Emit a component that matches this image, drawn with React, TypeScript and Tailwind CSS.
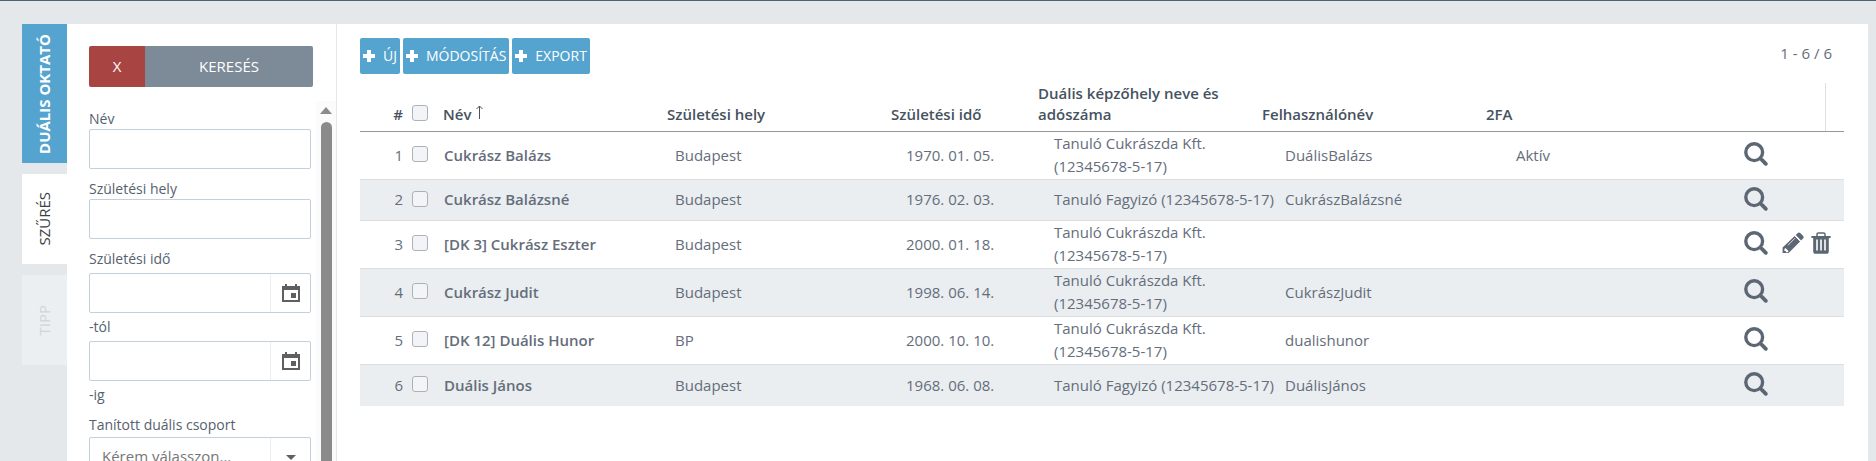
import { useState } from "react";
import type { ReactNode } from "react";

type Teacher = {
  id: number;
  name: string;
  birthPlace: string;
  birthDate: string;
  company: string;
  username: string;
  twoFactor: string;
  editable?: boolean;
};

const teachers: Teacher[] = [
  { id: 1, name: "Cukrász Balázs", birthPlace: "Budapest", birthDate: "1970. 01. 05.", company: "Tanuló Cukrászda Kft. (12345678-5-17)", username: "DuálisBalázs", twoFactor: "Aktív" },
  { id: 2, name: "Cukrász Balázsné", birthPlace: "Budapest", birthDate: "1976. 02. 03.", company: "Tanuló Fagyizó (12345678-5-17)", username: "CukrászBalázsné", twoFactor: "" },
  { id: 3, name: "[DK 3] Cukrász Eszter", birthPlace: "Budapest", birthDate: "2000. 01. 18.", company: "Tanuló Cukrászda Kft. (12345678-5-17)", username: "", twoFactor: "", editable: true },
  { id: 4, name: "Cukrász Judit", birthPlace: "Budapest", birthDate: "1998. 06. 14.", company: "Tanuló Cukrászda Kft. (12345678-5-17)", username: "CukrászJudit", twoFactor: "" },
  { id: 5, name: "[DK 12] Duális Hunor", birthPlace: "BP", birthDate: "2000. 10. 10.", company: "Tanuló Cukrászda Kft. (12345678-5-17)", username: "dualishunor", twoFactor: "" },
  { id: 6, name: "Duális János", birthPlace: "Budapest", birthDate: "1968. 06. 08.", company: "Tanuló Fagyizó (12345678-5-17)", username: "DuálisJános", twoFactor: "" },
];

const SearchIcon = () => (
  <svg className="w-6 h-6" viewBox="0 0 24 24" fill="none" stroke="currentColor">
    <circle cx="10.2" cy="10.2" r="8.4" strokeWidth="3.4" />
    <path d="M16.4 16.4l2 2" strokeWidth="3" />
    <path d="M18.2 18.2l3.6 3.6" strokeWidth="3.8" strokeLinecap="round" />
  </svg>
);

const PencilIcon = () => (
  <svg className="w-[22px] h-[22px]" viewBox="0 0 22 22" fill="currentColor">
    <path d="M15.6 1.2a2 2 0 0 1 2.8 0l2.6 2.6a2 2 0 0 1 0 2.8l-1.9 1.9-5.4-5.4z" />
    <path d="M12.7 4.1l5.4 5.4L6.6 21H.6v-5.6zM2.4 17.1v1.8h1.5v1.4h1.8l1-1.1-3.2-3.2z" fillRule="evenodd" />
    <path d="M12.9 3.900l5.400 5.400" stroke="#fff" strokeWidth="1" fill="none" />
    <path d="M6 13.2l7-7" stroke="#fff" strokeWidth=".8" fill="none" />
  </svg>
);

const TrashIcon = () => (
  <svg className="w-5 h-[22px]" viewBox="0 0 20 22" fill="currentColor">
    <path d="M6 4V2.2C6 1.3 6.5.9 7.3.9h5.4c.8 0 1.3.4 1.3 1.3V4" fill="none" stroke="currentColor" strokeWidth="1.5" />
    <path d="M.4 4h19.2v2H.4z" />
    <path
      fillRule="evenodd"
      d="M2.2 6h15.6v13.4c0 1.5-.9 2.4-2.3 2.4h-11c-1.4 0-2.3-.9-2.3-2.4zM5.2 7.6v10.8h1.6V7.6zM9.2 7.6v10.8h1.6V7.6zM13.2 7.6v10.8h1.6V7.6z"
    />
  </svg>
);

const PlusIcon = () => (
  <svg className="w-3 h-3" viewBox="0 0 12 12" fill="currentColor">
    <path d="M4 0h4v4h4v4H8v4H4V8H0V4h4z" />
  </svg>
);

const CalendarIcon = () => (
  <svg className="w-[18px] h-[18px]" viewBox="0 0 18 18" fill="#5f5f5f">
    <path fillRule="evenodd" d="M0 2h3V0h2v2h8V0h2v2h3v16H0zM2 6v10h14V6z" />
    <path d="M9 9h5v5H9z" />
  </svg>
);

const SideTab = ({ children, className }: { children: ReactNode; className: string }) => (
  <button type="button" className={`w-full flex items-center justify-center text-[15px] ${className}`}>
    <span className="[writing-mode:vertical-rl] rotate-180">{children}</span>
  </button>
);

const TextField = ({ id, label }: { id: string; label: string }) => (
  <div className="mb-[10px]">
    <label htmlFor={id} className="block h-5 leading-5 font-medium">
      {label}
    </label>
    <input id={id} type="text" className="block w-full h-10 px-3 border border-[#c3cfd9] rounded-xs outline-none" />
  </div>
);

const DateField = ({ id, suffix }: { id: string; suffix: string }) => (
  <div>
    <div className="flex h-10 border border-[#c3cfd9] rounded-xs">
      <input id={id} type="text" aria-label={"Születési idő " + suffix} className="flex-1 min-w-0 px-3 outline-none" />
      <button type="button" aria-label="Naptár" className="w-10 flex items-center justify-center border-l border-[#eceff1]">
        <CalendarIcon />
      </button>
    </div>
    <label htmlFor={id} className="block h-7 leading-7 font-medium">
      {suffix}
    </label>
  </div>
);

const ToolbarButton = ({ children }: { children: ReactNode }) => (
  <button type="button" className="h-9 px-[3px] flex items-center gap-2 bg-[#55a4d0] text-white text-sm rounded-xs">
    <PlusIcon />
    {children}
  </button>
);

const CheckBox = ({ label, checked, onChange }: { label: string; checked: boolean; onChange: () => void }) => (
  <input
    type="checkbox"
    aria-label={label}
    checked={checked}
    onChange={onChange}
    className="block w-4 h-4 appearance-none border border-[#adb1b8] rounded-[3px] bg-[#f3f4f7] checked:bg-[#55a4d0]"
  />
);

const Filters = () => (
  <aside className="w-[270px] shrink-0 flex flex-col border-r border-[#e6e9ec] text-sm text-[#56616e]">
    <div className="flex ml-[22px] mr-[23px] mt-[22px] h-[41px] text-[15px] text-white rounded-xs overflow-hidden">
      <button type="button" className="w-14 bg-[#a84442]">X</button>
      <button type="button" className="flex-1 bg-[#7d8a97]">KERESÉS</button>
    </div>
    <div className="flex flex-1 min-h-0 mt-[14px]">
      <form className="flex-1 min-w-0 pl-[22px] pr-[5px] pt-2 overflow-hidden">
        <TextField id="name" label="Név" />
        <TextField id="birth-place" label="Születési hely" />
        <fieldset className="min-w-0">
          <legend className="h-6 leading-5 font-medium">Születési idő</legend>
          <DateField id="birth-from" suffix="-tól" />
          <DateField id="birth-to" suffix="-ig" />
        </fieldset>
        <label htmlFor="group" className="block mt-1 h-6 leading-6 font-medium">
          Tanított duális csoport
        </label>
        <div className="relative border border-[#c3cfd9] rounded-xs">
          <select id="group" className="block w-full h-[38px] pl-3 appearance-none text-[15px] text-[#757575]">
            <option>Kérem válasszon...</option>
          </select>
          <span className="absolute right-0 inset-y-0 w-10 flex items-center justify-center border-l border-[#eceff1] pointer-events-none">
            <svg className="w-[10px] h-[5px]" viewBox="0 0 10 5" fill="#5f5f5f">
              <path d="M0 0h10L5 5z" />
            </svg>
          </span>
        </div>
      </form>
      <div className="w-5 bg-[#fbfbfb] flex flex-col items-center gap-2 pt-[6px]">
        <svg className="w-3 h-[7px] shrink-0" viewBox="0 0 12 7" fill="#8b8b8b">
          <path d="M6 0l6 7H0z" />
        </svg>
        <div className="w-[11px] flex-1 bg-[#8b8b8b] rounded-t-full"></div>
      </div>
    </div>
  </aside>
);

const TeacherTable = () => {
  const [selected, setSelected] = useState<number[]>([]);

  const toggle = (id: number) => {
    setSelected(selected.includes(id) ? selected.filter((s) => s !== id) : [...selected, id]);
  };

  const toggleAll = () => {
    setSelected(selected.length === teachers.length ? [] : teachers.map((t) => t.id));
  };

  return (
    <table className="block mt-[9px] text-[15px] text-[#656d7b]">
      <thead className="block border-b border-[#98999b] text-[#46525e]">
        <tr className="grid grid-cols-[43px_38px_224fr_224fr_147fr_224fr_224fr_224fr_117px] items-end mr-[18px] min-h-12 border-r border-[#dddfe1] text-left leading-[21px] *:font-semibold">
          <th className="pb-[6px] text-right">#</th>
          <th className="pb-[10px] pl-[9px]">
            <CheckBox label="Összes kijelölése" checked={selected.length === teachers.length} onChange={toggleAll} />
          </th>
          <th className="pb-[6px] pl-[2px]">
            <button type="button" className="flex gap-[5px]">
              Név
              <svg className="w-[7px] h-[14px] mt-px" viewBox="0 0 7 14" fill="none" stroke="currentColor">
                <path d="M3.5 14V1M.5 4l3-3 3 3" />
              </svg>
            </button>
          </th>
          <th className="pb-[6px] pl-[2px]">Születési hely</th>
          <th className="pb-[6px] pl-[2px]">Születési idő</th>
          <th className="pb-[6px] pl-[2px]">Duális képzőhely neve és adószáma</th>
          <th className="pb-[6px] pl-[2px]">Felhasználónév</th>
          <th className="pb-[6px] pl-[2px]">2FA</th>
        </tr>
      </thead>
      <tbody className="block">
        {teachers.map((t) => (
          <tr
            key={t.id}
            className="grid grid-cols-[43px_38px_231fr_231fr_148fr_231fr_231fr_231fr_100px] items-center min-h-[41px] pb-px border-b border-[#dcdfe2] last:border-0 even:bg-[#eaeef1] leading-[23px]"
          >
            <td className="text-right">{t.id}</td>
            <td className="pl-[9px] pb-[2px]">
              <CheckBox label={t.name} checked={selected.includes(t.id)} onChange={() => toggle(t.id)} />
            </td>
            <td className="pl-[3px] font-semibold">{t.name}</td>
            <td className="pl-[3px]">{t.birthPlace}</td>
            <td className="pl-[3px]">{t.birthDate}</td>
            <td className="pl-[3px]">{t.company}</td>
            <td className="pl-[3px]">{t.username}</td>
            <td className="pl-[3px]">{t.twoFactor}</td>
            <td className="flex items-center pb-[2px] text-[#5d6773]">
              <button type="button" aria-label="Megtekintés">
                <SearchIcon />
              </button>
              {t.editable && (
                <>
                  <button type="button" aria-label="Szerkesztés" className="ml-[14px]">
                    <PencilIcon />
                  </button>
                  <button type="button" aria-label="Törlés" className="ml-[7px]">
                    <TrashIcon />
                  </button>
                </>
              )}
            </td>
          </tr>
        ))}
      </tbody>
    </table>
  );
};

const App = () => {
  return (
    <div className="h-screen overflow-hidden flex bg-[#e4e8eb] border-t border-[#50616f] pt-[23px] pl-[22px] pr-2 font-['Open_Sans',sans-serif]">
      <nav className="w-[45px] shrink-0 flex flex-col gap-[11px]">
        <SideTab className="h-[139px] bg-[#55a4d0] text-white font-bold">DUÁLIS OKTATÓ</SideTab>
        <SideTab className="h-[90px] bg-white text-[#3c3f43]">SZŰRÉS</SideTab>
        <SideTab className="h-[90px] bg-[#ebeff2] text-[#cfd5da]">TIPP</SideTab>
      </nav>
      <div className="flex-1 min-w-0 flex bg-white">
        <Filters />
        <main className="flex-1 min-w-0 pl-[23px] pr-6 pt-[14px]">
          <div className="flex justify-between">
            <div className="flex gap-[3px]">
              <ToolbarButton>ÚJ</ToolbarButton>
              <ToolbarButton>MÓDOSÍTÁS</ToolbarButton>
              <ToolbarButton>EXPORT</ToolbarButton>
            </div>
            <span className="mr-3 mt-1 text-[15px] leading-[22px] text-[#656d7b]">1 - 6 / 6</span>
          </div>
          <TeacherTable />
        </main>
      </div>
    </div>
  );
};

export default App;
